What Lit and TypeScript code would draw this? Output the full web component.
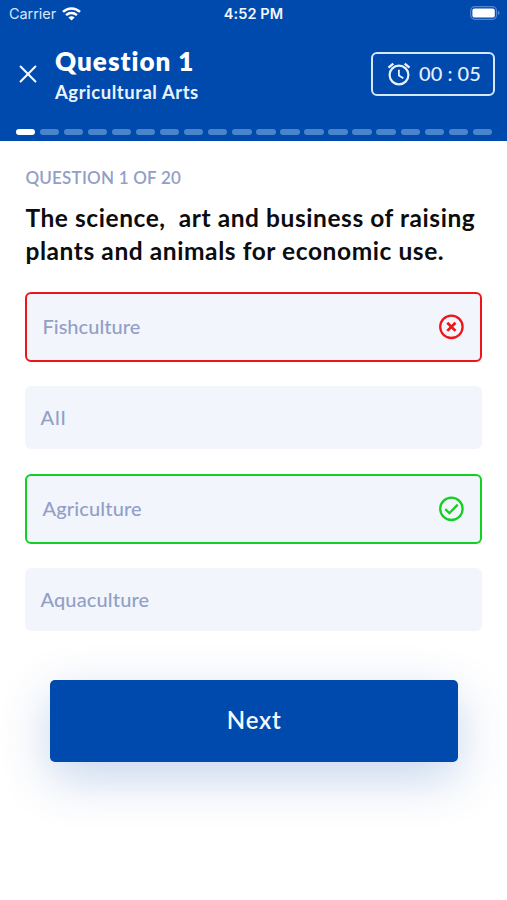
import { LitElement, html, css, svg } from "lit";
import { customElement, property } from "lit/decorators.js";
import { classMap } from "lit/directives/class-map.js";

type Answer = { text: string; state: "" | "wrong" | "right"; cls: string };

const answers: Answer[] = [
  { text: "Fishculture", state: "wrong", cls: "t0" },
  { text: "All", state: "", cls: "t1" },
  { text: "Agriculture", state: "right", cls: "t2" },
  { text: "Aquaculture", state: "", cls: "t3" },
];

@customElement("status-bar")
class StatusBar extends LitElement {
  static styles = css`
    :host { display: grid; grid-template-columns: 1fr auto 1fr; align-items: center; height: 28px; padding: 0 7px 0 9px;
      font: 400 14.5px/28px Inter, sans-serif; color: #d7e6fb; }
    .left { display: flex; align-items: center; gap: 6px; margin-top: -1px; }
    .carrier { letter-spacing: -0.07px; }
    .time { font-weight: 600; color: #f3f8ff; letter-spacing: 0.1px; font-size: 14.5px; margin-right: 2px; }
    .battery { justify-self: end; margin-top: -2px; }
    svg { display: block; }
  `;
  render() {
    return html`
      <div class="left"><span class="carrier">Carrier</span>
        <svg width="19" height="14" viewBox="0 0 19 14" fill="none" stroke="#fff" stroke-width="2.5">
          <path d="M1 4.9C5.8.3 13.2.3 18 4.9M4.1 8.1C7.2 5.3 11.8 5.3 14.9 8.1" />
          <path d="M9.5 13.6L6.4 10.4C8.2 8.9 10.8 8.9 12.6 10.4Z" fill="#fff" stroke="none" />
        </svg>
      </div>
      <span class="time">4:52 PM</span>
      <svg class="battery" width="30" height="14" viewBox="0 0 30 14">
        <rect x=".7" y=".7" width="25.8" height="12.6" rx="4" fill="none" stroke="#5385d0" stroke-width="1.2" />
        <rect x="2.4" y="2.4" width="22.4" height="9.2" rx="2.2" fill="#fff" />
        <path d="M27.9 4.8Q29.6 5.4 29.6 7T27.9 9.2Z" fill="#5385d0" />
      </svg>`;
  }
}

@customElement("answer-option")
class AnswerOption extends LitElement {
  @property() text = "";
  @property() state = "";
  @property() cls = "";
  static styles = css`
    :host { display: block; }
    .box { box-sizing: border-box; display: flex; align-items: center; justify-content: space-between; height: 63px;
      padding: 0 15px; border-radius: 6px; background: #f2f5fc; color: #929fc6; font: 500 20px/26px Lato, sans-serif; }
    .wrong, .right { height: 70px; border: 2px solid #ee1518; padding: 0 16px 0 15px; }
    .right { border-color: #12d020; }
    svg { display: block; }
    span { padding-bottom: 2px; }
    .t0 { letter-spacing: 0.05px; }
    .t1 { letter-spacing: 1px; }
    .t2 { letter-spacing: 0.15px; }
    .t3 { letter-spacing: 0.15px; }
  `;
  render() {
    const wrong = this.state === "wrong";
    const mark = wrong
      ? svg`<path d="M9.3 8.7L17.5 16.9M17.5 8.7L9.3 16.9" stroke-width="2.7" />`
      : svg`<path d="M7.3 13.1L11.4 17.2L19.7 8.6" stroke-width="2.3" />`;
    return html`<div class=${classMap({ box: true, wrong, right: this.state === "right" })}>
      <span class=${this.cls}>${this.text}</span>
      ${this.state
        ? html`<svg width="26" height="26" viewBox="0 0 26 26" fill="none" stroke=${wrong ? "#ee1518" : "#12d020"}>
            <circle cx="13.4" cy="12.8" r="11.2" stroke-width="2.3" />${mark}</svg>`
        : ""}
    </div>`;
  }
}

@customElement("app-root")
class AppRoot extends LitElement {
  static styles = css`
    :host { display: block; height: 900px; background: #fff; font-family: Lato, sans-serif; overflow: hidden; }
    header { height: 141px; background: #004aad; display: flex; flex-direction: column; }
    .row { display: flex; align-items: center; height: 92px; padding: 0 12px 0 19px; }
    .close { margin-right: 18px; }
    svg { display: block; }
    .titles { flex: 1; padding-top: 1px; }
    .title { font: 800 26px/34px Lato, sans-serif; color: #fff; letter-spacing: 1px; }
    .topic { font: 700 18.5px/27px Lato, sans-serif; color: #e9f3ff; letter-spacing: 0.52px; padding-top: 1px; margin-bottom: -1px; }
    .timer { box-sizing: border-box; width: 124px; height: 44px; border: 2px solid #d5e7ff; border-radius: 6px; display: flex;
      align-items: center; padding-left: 14px; gap: 8px; color: #e4efff; }
    .clock { font: 500 20px/26px Lato, sans-serif; white-space: pre; letter-spacing: 0.05px; padding-bottom: 2px; }
    .steps { display: flex; gap: 4.6px; padding: 9px 15px 0 15.5px; }
    .step { flex: 1; height: 6px; border-radius: 3px; background: #4c84cc; }
    .current { background: #fff; }
    main { padding: 23px 24.6px 0 25.4px; }
    .count { font: 600 17px/28px Lato, sans-serif; color: #929fc6; letter-spacing: 0.22px; }
    .question { margin: 9px 0 0; font: 700 24.5px/33px Lato, sans-serif; color: #0c0c0e; white-space: pre; }
    .l1 { letter-spacing: 0.57px; }
    .l2 { letter-spacing: 0.58px; }
    .answers { display: grid; gap: 24.5px; padding-top: 24.5px; }
    .next { display: flex; align-items: center; justify-content: center; height: 82px; margin: 48.5px 24px 0 24.6px; border-radius: 5px;
      background: #004aad; color: #f2f8ff; font: 600 24px/32px Lato, sans-serif; letter-spacing: 0.75px;
      box-shadow: 0 16px 50px rgba(0, 74, 173, 0.23); }
    .next span { padding-bottom: 1px; }
  `;
  render() {
    return html`
      <header>
        <status-bar></status-bar>
        <div class="row">
          <svg class="close" width="18" height="18" viewBox="0 0 18 18" fill="none" stroke="#f2f8ff" stroke-width="2.1" stroke-linecap="round">
            <path d="M1.6 1.6L16.4 16.4M16.4 1.6L1.6 16.4" />
          </svg>
          <div class="titles">
            <div class="title">Question 1</div>
            <div class="topic">Agricultural Arts</div>
          </div>
          <div class="timer">
            <svg width="24" height="24" viewBox="0 0 24 24" fill="none" stroke="#e8f2ff" stroke-width="2.2">
              <circle cx="12" cy="13" r="9.4" />
              <path d="M1.5 5.7L6.3 1.6M22.5 5.7L17.7 1.6" stroke-width="2.3" />
              <path d="M11.9 7.8V13.6L16.3 16.3" stroke-width="1.8" />
            </svg>
            <span class="clock">00 : 05</span>
          </div>
        </div>
        <div class="steps">
          ${Array.from({ length: 20 }, (_, i) => html`<div class=${classMap({ step: true, current: i === 0 })}></div>`)}
        </div>
      </header>
      <main>
        <div class="count">QUESTION 1 OF 20</div>
        <h1 class="question"><span class="l1">The science,  art and business of raising</span>
<span class="l2">plants and animals for economic use.</span></h1>
        <div class="answers">
          ${answers.map((a) => html`<answer-option .text=${a.text} .state=${a.state} .cls=${a.cls}></answer-option>`)}
        </div>
        <div class="next"><span>Next</span></div>
      </main>`;
  }
}
